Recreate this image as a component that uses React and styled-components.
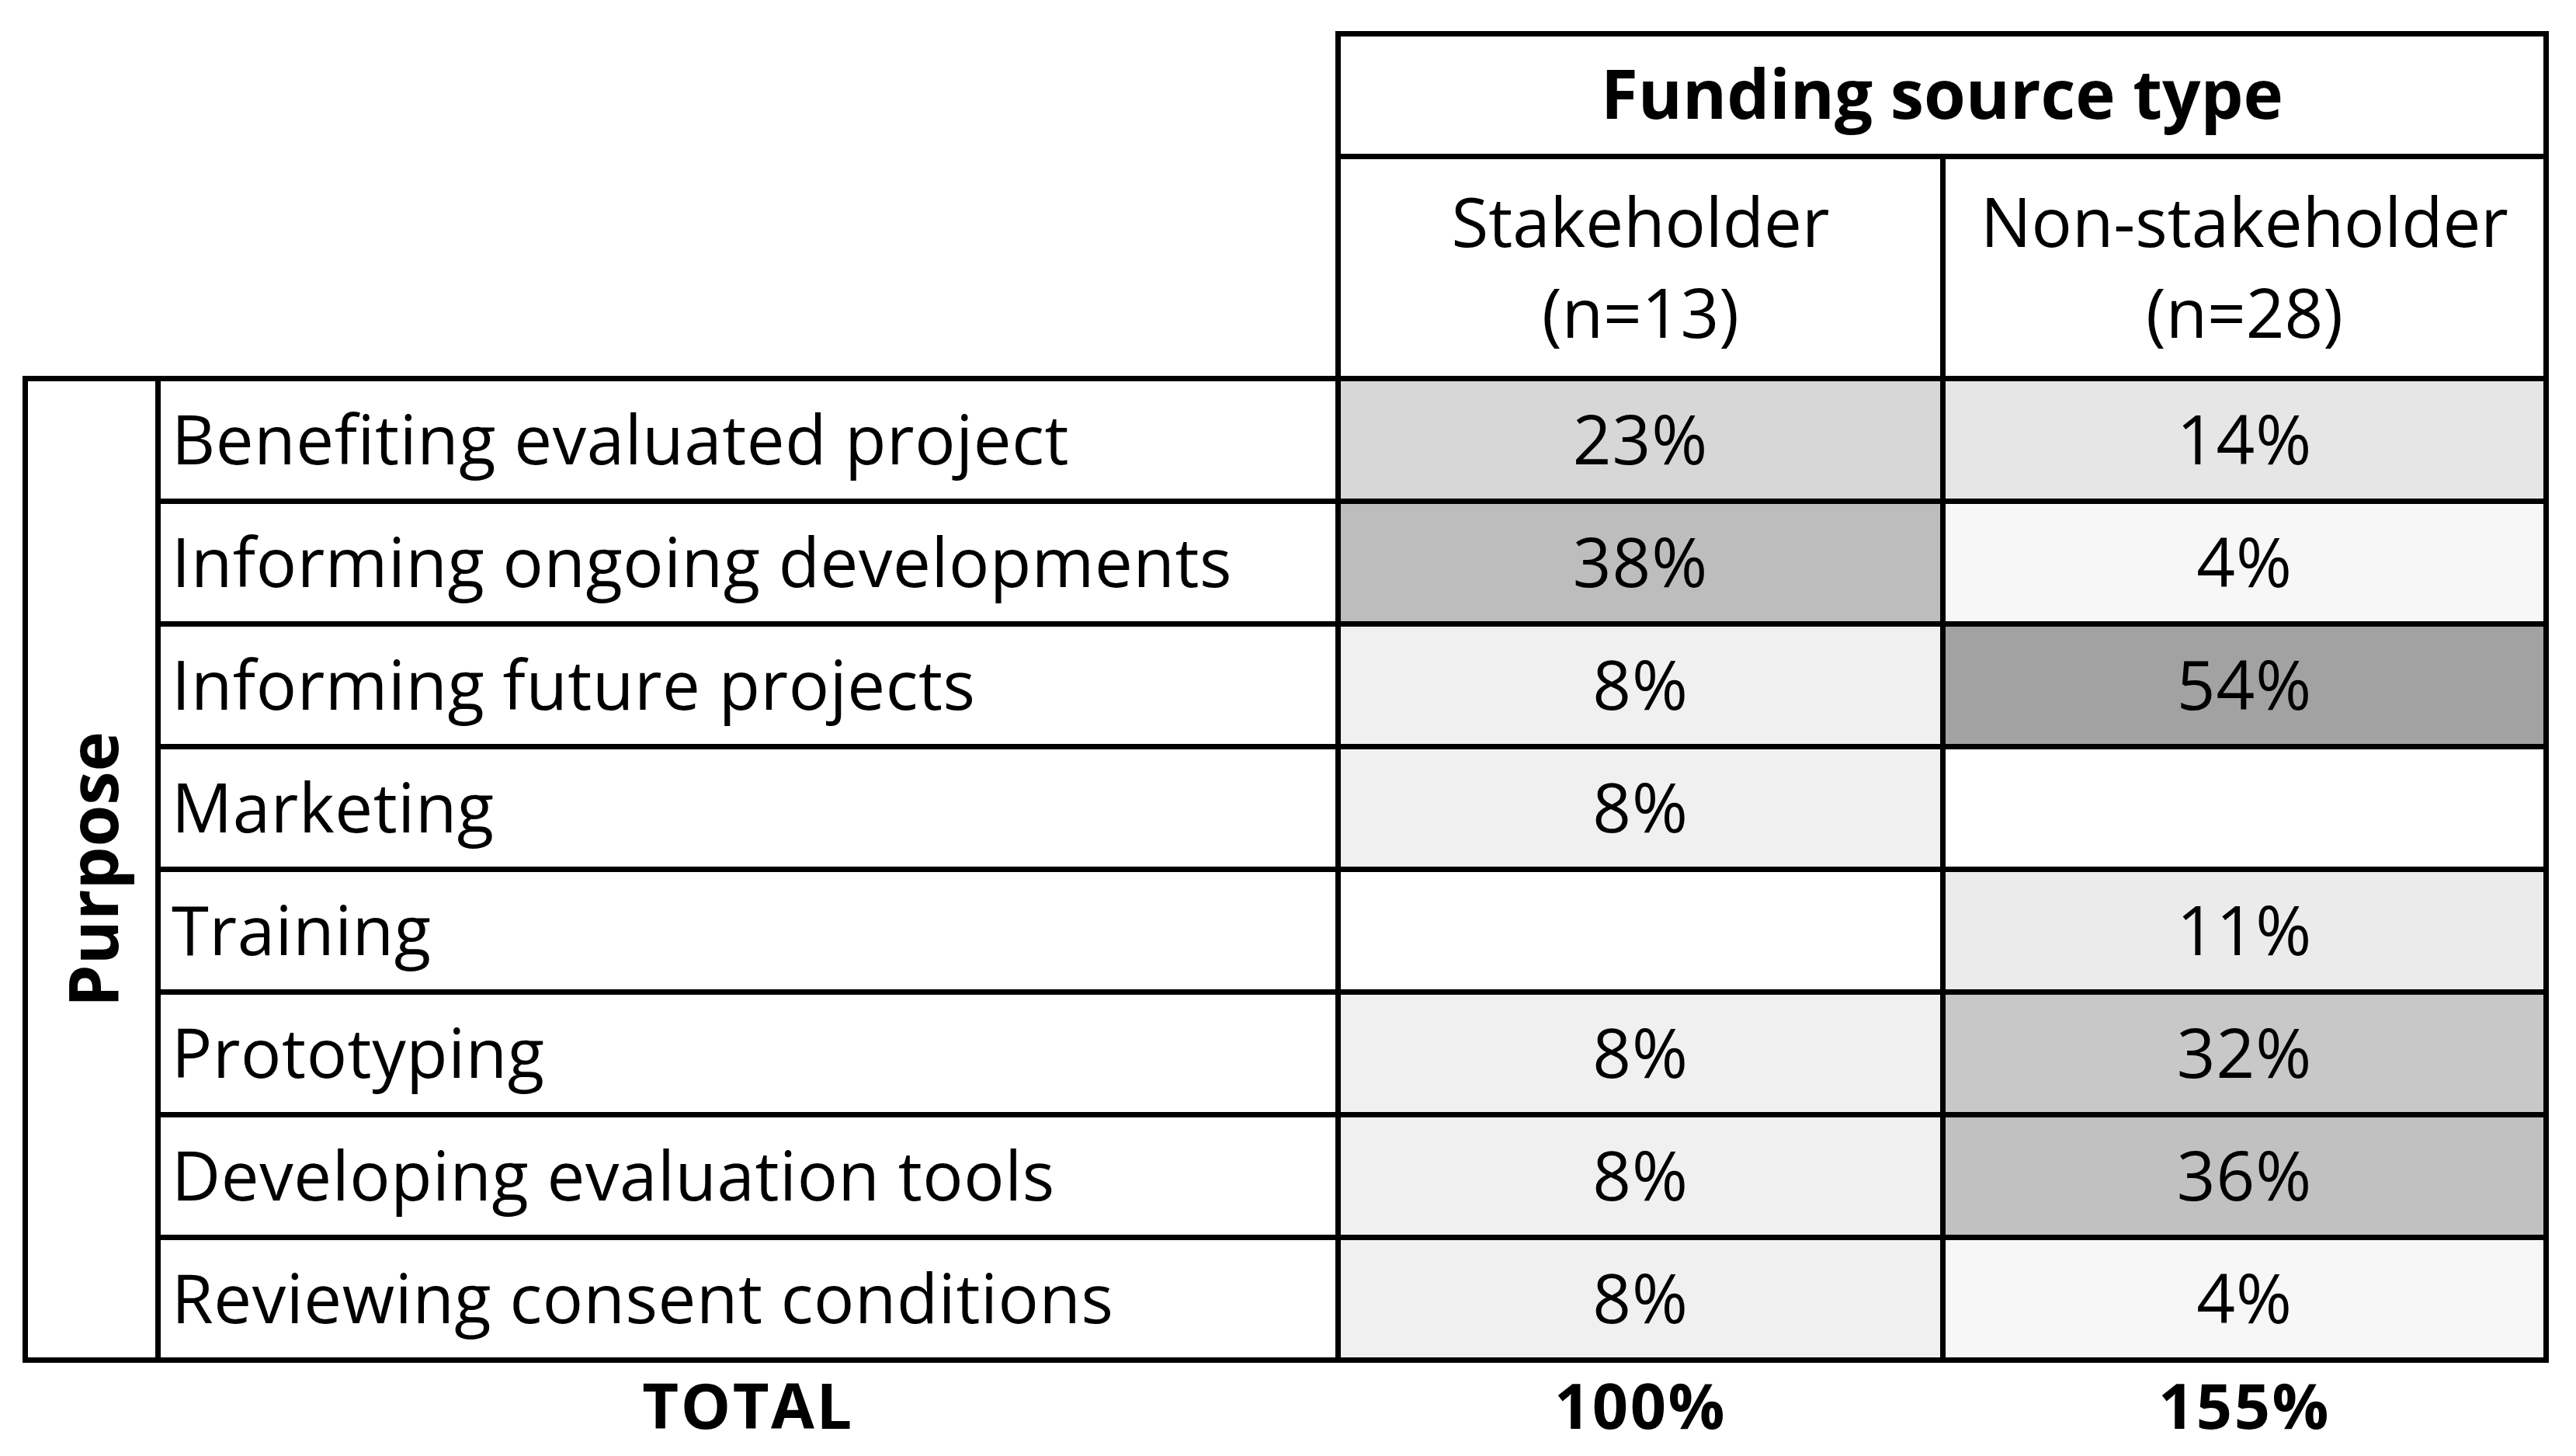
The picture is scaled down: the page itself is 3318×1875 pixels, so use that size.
import React from "react";
import styled, { createGlobalStyle } from "styled-components";

const GlobalStyle = createGlobalStyle`
  html, body { margin: 0; padding: 0; background: #ffffff; }
  body { font-family: "Open Sans", "Noto Sans", sans-serif; color: #000000; }
  * { box-sizing: border-box; }
`;

const COLS = "164px 1513px 772px 770px";

const Page = styled.div`
  width: 3318px;
  height: 1875px;
  padding: 40px 0 0 29px;
  display: flex;
`;

const Figure = styled.div`
  width: 3254px;
  display: flex;
  flex-direction: column;
`;

const HeadBlock = styled.div`
  align-self: flex-end;
  display: grid;
  grid-template-columns: 772px 770px;
  grid-template-rows: 151px 279px;
  gap: 7px;
  padding: 7px 7px 0 7px;
  background: #000000;
`;

const GroupTitle = styled.div`
  grid-column: 1 / span 2;
  background: #ffffff;
  display: flex;
  align-items: center;
  justify-content: center;
  font-size: 87px;
  font-weight: 700;
  line-height: 1;
  padding-bottom: 6px;
`;

const ColHead = styled.div`
  background: #ffffff;
  display: flex;
  align-items: center;
  justify-content: center;
  text-align: center;
  font-size: 87px;
  line-height: 117px;
  padding-bottom: 4px;
`;

const Body = styled.div`
  display: grid;
  grid-template-columns: ${COLS};
  grid-auto-rows: 151px;
  gap: 7px;
  padding: 7px;
  background: #000000;
`;

const SideHead = styled.div`
  grid-row: 1 / span 8;
  background: #ffffff;
  display: flex;
  align-items: center;
  justify-content: center;
`;

const SideText = styled.span`
  writing-mode: vertical-rl;
  transform: rotate(180deg);
  font-size: 87px;
  font-weight: 700;
  line-height: 1;
`;

const Label = styled.div`
  background: #ffffff;
  display: flex;
  align-items: center;
  padding: 0 0 5px 14px;
  font-size: 87px;
  letter-spacing: 0.6px;
  line-height: 1;
  white-space: nowrap;
`;

const Value = styled.div`
  background: ${(p) => p.$shade};
  display: flex;
  align-items: center;
  justify-content: center;
  padding-bottom: 5px;
  font-size: 87px;
  letter-spacing: 1px;
  line-height: 1;
`;

const TotalRow = styled.div`
  display: grid;
  grid-template-columns: ${COLS};
  gap: 7px;
  padding: 0 7px;
  margin-top: 13px;
`;

const TotalCell = styled.div`
  text-align: center;
  font-size: 81px;
  font-weight: 700;
  letter-spacing: 2.5px;
  line-height: 1;
`;

const shadeOf = (v) => {
  if (v == null) return "#ffffff";
  const g = Math.round(254 - 1.7 * v);
  return `rgb(${g}, ${g}, ${g})`;
};

const rows = [
  ["Benefiting evaluated project", 23, 14],
  ["Informing ongoing developments", 38, 4],
  ["Informing future projects", 8, 54],
  ["Marketing", 8, null],
  ["Training", null, 11],
  ["Prototyping", 8, 32],
  ["Developing evaluation tools", 8, 36],
  ["Reviewing consent conditions", 8, 4],
];

export default function App() {
  return (
    <>
      <GlobalStyle />
      <Page>
        <Figure>
          <HeadBlock>
            <GroupTitle>Funding source type</GroupTitle>
            <ColHead>
              Stakeholder
              <br />
              (n=13)
            </ColHead>
            <ColHead>
              Non-stakeholder
              <br />
              (n=28)
            </ColHead>
          </HeadBlock>
          <Body>
            <SideHead>
              <SideText>Purpose</SideText>
            </SideHead>
            {rows.map(([label, s, n]) => (
              <React.Fragment key={label}>
                <Label>{label}</Label>
                <Value $shade={shadeOf(s)}>{s != null ? `${s}%` : ""}</Value>
                <Value $shade={shadeOf(n)}>{n != null ? `${n}%` : ""}</Value>
              </React.Fragment>
            ))}
          </Body>
          <TotalRow>
            <span />
            <TotalCell>TOTAL</TotalCell>
            <TotalCell>100%</TotalCell>
            <TotalCell>155%</TotalCell>
          </TotalRow>
        </Figure>
      </Page>
    </>
  );
}
